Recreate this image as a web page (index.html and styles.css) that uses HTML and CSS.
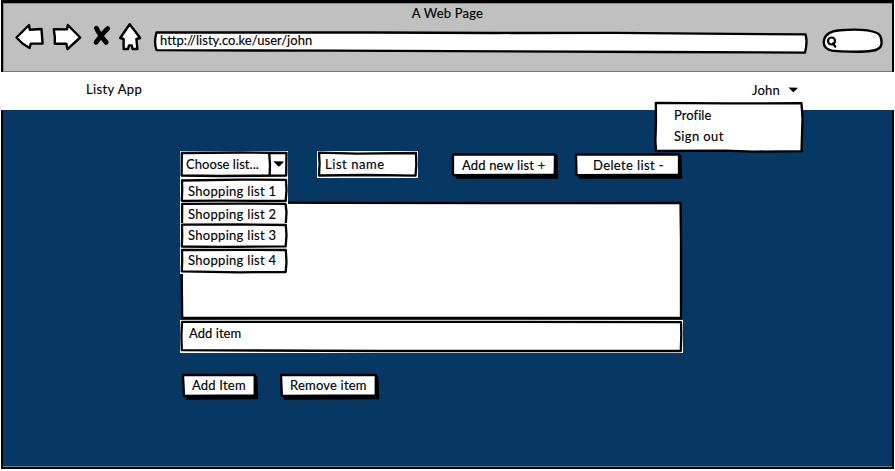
FILE: index.html
```html
<!DOCTYPE html>
<html lang="en">
<head>
<meta charset="utf-8">
<title>Listy App</title>
<link rel="stylesheet" href="styles.css">
</head>
<body>
<div class="browser">
  <header class="chrome">
    <div class="title"><span class="t-title">A Web Page</span></div>
    <div class="tools">
      <svg class="nav-icons" width="130" height="34" viewBox="14 20 130 34">
        <path class="ico" d="M16.5 37.5 L29 25 L29.8 29.8 L41.5 29 L42.6 43.6 L30.8 43.6 L29.6 48 L22.5 43.5 Z"/>
        <path class="ico" d="M53.8 29.3 L67 29.4 L67.8 25 L80.2 37.5 L67.5 49.2 L66.2 43.6 L54.8 43.8 L54.8 37 Z"/>
        <path class="cross" d="M96.4 28.3 Q99 34 106.2 42.4 M107.7 28.6 Q102 34 96 42.3"/>
        <path class="ico" d="M129.7 24.3 L140.2 38 L136.4 39 L137.4 49 L132.6 49 L131.8 45.5 L129 45.5 L128 49 L123.6 49 L123.6 39 L120.2 38 Z"/>
      </svg>
      <div class="address sk">
        <svg class="frame" viewBox="0 0 654 24" preserveAspectRatio="none"><path d="M3.5 2.5 L220 2.5 L340 3 L460 2.8 L650.5 4.4 Q652.8 12 650 22.6 L500 22 L180 20.7 L3.5 20.2 Q.6 12 3.5 2.5 Z"/></svg>
        <span class="t-url">http://listy.co.ke/user/john</span>
      </div>
      <svg class="search" width="62" height="28" viewBox="822 27 62 28">
        <path class="ico" d="M823.8 41.5 C824.5 33 832 31 840 30.3 C855 29 870 30 877 33 C881 35 881.8 40 881.5 44 C881 48.5 878 50 872 50.8 C860 52.5 840 51.5 832 50.6 C826 49.5 823.5 46 823.8 41.5 Z"/>
        <circle class="lens" cx="831.5" cy="41" r="3.5"/><path class="lens" d="M833 43.5 L835.3 46.6"/>
      </svg>
    </div>
  </header>
  <nav class="navbar">
    <span class="t-brand">Listy App</span>
    <div class="user">
      <span class="t-john">John</span>
      <svg width="11" height="6" viewBox="0 0 11 6"><path d="M.5 .5 L10 .7 Q7 4 5.3 5.2 Q3.5 3.5 .5 .5Z"/></svg>
      <div class="profile-menu sk">
        <svg class="frame" viewBox="0 0 150 52"><path d="M1.8 1.8 L70 2.4 L147.5 2.2 L148.5 18 L147.5 50.2 L100 50.6 L70 49.7 L2 50 L1.4 40 L2 20 Z"/></svg>
        <span class="t-profile">Profile</span>
        <span class="t-sign">Sign out</span>
      </div>
    </div>
  </nav>
  <main class="page">
    <div class="toolbar">
      <div class="select sk paper">
        <svg class="frame" viewBox="0 0 108 27"><path d="M1.8 2 L60 1.5 L106.5 2 L106.2 24.5 L40 25 L1.6 24.5 Z M89.2 2 L90 14 L89.6 25"/><path class="solid" d="M94 10.5 L103.5 10.7 Q101 14 98.8 15.4 Q96 13.3 94 10.5Z"/></svg>
        <span class="t-choose">Choose list...</span>
        <div class="options">
          <div class="opt sk paper o1"><svg class="frame" viewBox="0 0 108 24"><path d="M2 2.5 L60 1.6 L106 1.8 L106.5 12 L105.7 23 L40 22.6 L1.8 22.8 L2.2 12Z"/></svg><span class="t-opt">Shopping list 1</span></div>
          <div class="opt sk paper o2"><svg class="frame" viewBox="0 0 108 21"><path d="M2 24 L2.2 1.8 L60 1.6 L105.5 1.8 L106.5 10 L105.7 24"/></svg><span class="t-opt">Shopping list 2</span></div>
          <div class="opt sk paper o3"><svg class="frame" viewBox="0 0 108 25"><path d="M2 1.6 L60 1.5 L105.8 2 L106.5 12 L105.7 23.4 L40 24 L1.8 23.5 L2.2 12Z"/></svg><span class="t-opt">Shopping list 3</span></div>
          <div class="opt sk paper o4"><svg class="frame" viewBox="0 0 108 26"><path d="M2 2 L60 1.8 L105.8 2 L106.5 14 L105.7 24 L60 24.3 L1.8 23.4 L2.2 12Z"/></svg><span class="t-opt">Shopping list 4</span></div>
        </div>
      </div>
      <div class="name sk paper">
        <svg class="frame" viewBox="0 0 101 27"><path d="M2 1.6 L40 2.7 L99 2 L99.3 14 L98.5 24.6 L50 24 L2 24.5 L2.6 12Z"/></svg>
        <span class="t-name">List name</span>
      </div>
      <div class="btn sk b-new">
        <svg class="frame" viewBox="0 0 108 26"><path class="solid" d="M4 2 L106 2 L107 25.5 L5 25.5Z"/><path d="M2 1.5 L104 1.5 L103.7 21.9 L60 21.8 L2 22.2 Z"/></svg>
        <span class="t-new">Add new list +</span>
      </div>
      <div class="btn sk b-del">
        <svg class="frame" viewBox="0 0 109 26"><path class="solid" d="M4 2 L107 2 L108 25.5 L5 25.5Z"/><path d="M2 1.5 L105 1.5 L105 21.8 L60 21.8 L2.5 22.2 Z"/></svg>
        <span class="t-del">Delete list -</span>
      </div>
    </div>
    <div class="listbox sk">
      <svg class="frame" viewBox="0 0 503 119"><path d="M2 1.6 L150 1.8 L350 2.2 L500.5 2 L501 40 L501 117 L200 116.8 L2.2 117 L1.6 60Z"/></svg>
    </div>
    <div class="additem sk paper">
      <svg class="frame" viewBox="0 0 503 33"><path d="M2 1.8 L200 1.8 L501 2.1 L501.3 14 L500.8 31 L200 31 L1.8 30.2 L1.4 16Z"/></svg>
      <span class="t-additem">Add item</span>
    </div>
    <div class="actions">
      <div class="btn sk b-add">
        <svg class="frame" viewBox="0 0 78 27"><path class="solid" d="M4 3 L76 3 L77 26 L5 26.5Z"/><path d="M2 2 L73.7 2 L73.7 22.3 L3 22.8 Z"/></svg>
        <span class="t-add">Add Item</span>
      </div>
      <div class="btn sk b-rem">
        <svg class="frame" viewBox="0 0 100 27" preserveAspectRatio="none"><path class="solid" d="M4 3 L98 3 L99 26 L5 26.5Z"/><path d="M2 2 L95.8 2 L95.8 22.3 L2.8 22.8 Z"/></svg>
        <span class="t-rem">Remove item</span>
      </div>
    </div>
  </main>
</div>
</body>
</html>
```
FILE: styles.css
```css
* { box-sizing: border-box; }
body {
  margin: 0;
  background: #fff;
  color: #000;
  font: 13px/16px Lato, "Liberation Sans", sans-serif;
  -webkit-text-stroke: 0.15px #000;
  overflow: hidden;
}
span { display: block; width: max-content; white-space: nowrap; letter-spacing: 0.2px; }
svg { display: block; flex: none; }
.t-url { letter-spacing: 0.02px; }
.t-opt { letter-spacing: 0.3px; }
.t-choose { letter-spacing: 0.05px; }
.t-name { letter-spacing: 0.55px; }
.t-del, .t-sign, .t-brand { letter-spacing: 0.38px; }
.t-john { letter-spacing: 0.2px; }
.t-new { letter-spacing: 0.15px; }
.t-additem, .t-profile { letter-spacing: 0.05px; }

.browser { width: 895px; height: 471px; display: grid; grid-template-rows: 72px 38px 359px; }
.chrome {
  margin: 0 1px 0 1px;
  background: #c0c0c0;
  border: solid #000;
  border-width: 3px 2px 0;
  box-shadow: inset 0 1px #8a8a8a, inset 0 -1px #777, inset 1px 0 #8a8a8a;
}
.title { display: flex; justify-content: center; padding: 2px 0 0; height: 24px; }
.tools { display: flex; padding-left: 11px; }
.nav-icons { margin-top: -7px; }
.address { width: 656px; height: 24px; margin: 3px 0 0 9px; padding: 2px 0 0 7px; }
.search { margin-left: 13px; }

.ico { fill: #fff; stroke: #000; stroke-width: 2.4; stroke-linejoin: round; }
.cross { fill: none; stroke: #000; stroke-width: 4.8; stroke-linecap: round; }
.lens { fill: none; stroke: #000; stroke-width: 2.2; stroke-linecap: round; }

.sk { position: relative; isolation: isolate; }
.frame { position: absolute; inset: 0; width: 100%; height: 100%; z-index: -1; }
.frame path { fill: #fff; stroke: #000; stroke-width: 2.3; stroke-linejoin: round; }
.frame .solid { fill: #000; stroke-width: 0.5; }
.paper { background: #fff; }

.navbar { background: #fff; display: flex; justify-content: space-between; padding: 9px 96px 0 86px; position: relative; z-index: 2; }
.user { position: relative; display: flex; width: 47px; height: 18px; justify-content: space-between; align-items: center; }
.profile-menu { position: absolute; left: -98px; top: 20px; width: 150px; height: 52px; padding: 4px 0 0 20px; line-height: 21px; }

.page { margin: 0 1px; background: #073763; border: solid #000; border-width: 0 2px 2px; padding: 41px 0 0 177px; box-shadow: inset 0 -1px #6f8298; }
.toolbar { display: flex; height: 50px; align-items: flex-start; }
.select { width: 108px; height: 27px; padding: 5px 0 0 6px; z-index: 1; }
.options { position: absolute; left: 0; top: 27px; width: 108px; }
.opt { padding-left: 8px; height: 24px; padding-top: 5px; }
.o2 { height: 21px; padding-top: 4px; overflow: hidden; }
.o3 { height: 25px; padding-top: 4px; }
.o4 { height: 26px; padding-top: 4px; }
.name { width: 101px; height: 27px; margin-left: 29px; padding: 5px 0 0 8px; }
.btn { height: 26px; }
.b-new { width: 108px; margin: 2px 0 0 33px; padding: 4px 0 0 11px; }
.b-del { width: 109px; margin: 2px 0 0 15px; padding: 4px 0 0 19px; }
.listbox { width: 503px; height: 119px; }
.additem { width: 503px; height: 33px; padding: 5px 0 0 9px; }
.actions { display: flex; gap: 20px; margin: 20px 0 0 1px; }
.b-add { width: 78px; height: 27px; padding: 4px 0 0 11px; }
.b-rem { width: 101px; height: 27px; padding: 4px 0 0 11px; }
```
